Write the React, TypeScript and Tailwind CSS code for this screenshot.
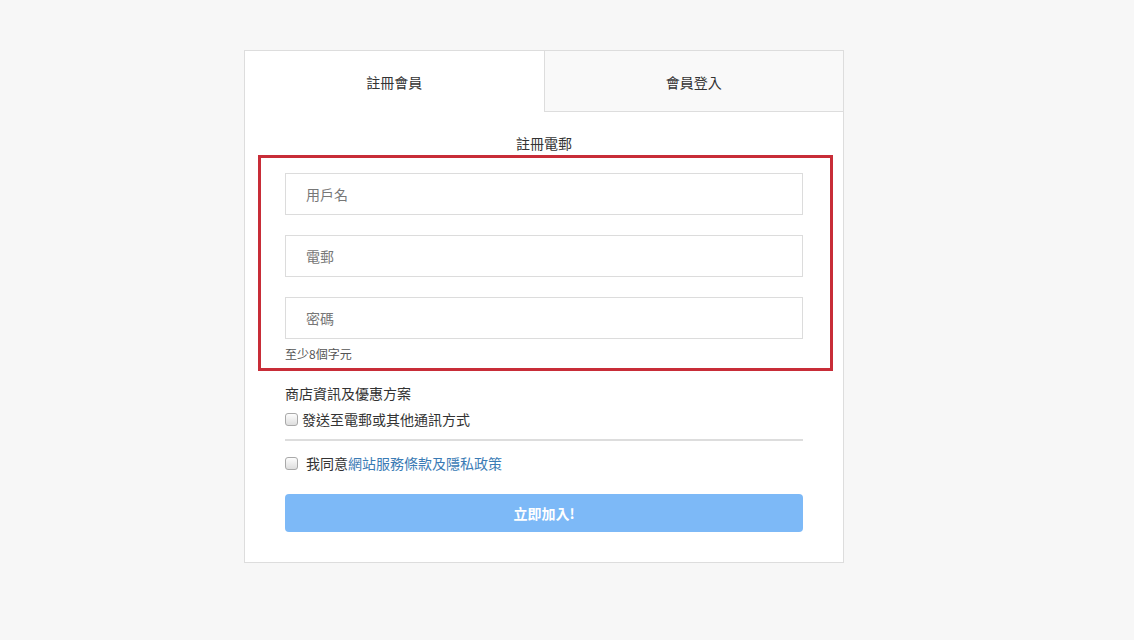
const font = { fontFamily: '"Noto Sans CJK TC", "Noto Sans", sans-serif' };

function Field({ placeholder }: { placeholder: string }) {
  return (
    <input
      type="text"
      placeholder={placeholder}
      className="block h-[42px] w-full border border-[#dcdcdc] bg-white px-[20px] text-[14px] text-[#555] placeholder:text-[#777] outline-none"
    />
  );
}

function Check() {
  return (
    <input
      type="checkbox"
      className="m-0 h-[13px] w-[13px] appearance-none rounded-[3px] border border-[#a9a9a9] bg-gradient-to-b from-[#fdfdfd] to-[#dedede]"
    />
  );
}

export default function App() {
  return (
    <div className="min-h-[640px] bg-[#f7f7f7] pt-[50px]" style={font}>
      <div className="ml-[244px] w-[600px] border border-[#dddddd] bg-white">
        {/* Tabs */}
        <div className="flex h-[61px]">
          <div className="flex flex-1 items-center justify-center pt-[2px] text-[14px] text-[#333]">註冊會員</div>
          <div className="flex flex-1 items-center justify-center border-b border-l border-[#dddddd] bg-[#f9f9f9] pt-[2px] text-[14px] text-[#333]">
            會員登入
          </div>
        </div>

        <div className="px-[40px] pb-[30px]">
          <div className="pt-[21px] text-center text-[14px] leading-[20px] text-[#333]">註冊電郵</div>

          {/* Highlighted fields */}
          <div className="mt-[2px] ml-[-27px] mr-[-30px] border-[3px] border-[#c82d38] pt-[15px] pb-[5px] pl-[24px] pr-[27px]">
            <div className="flex flex-col gap-[20px]">
              <Field placeholder="用戶名" />
              <Field placeholder="電郵" />
              <Field placeholder="密碼" />
            </div>
            <div className="mt-[6px] text-[12px] leading-[18px] text-[#555]">至少8個字元</div>
          </div>

          <div className="mt-[12px] text-[14px] leading-[20px] text-[#333]">商店資訊及優惠方案</div>
          <label className="mt-[6px] flex items-center text-[14px] leading-[20px] text-[#333]">
            <Check />
            <span className="ml-[4px]">發送至電郵或其他通訊方式</span>
          </label>

          <div className="mt-[10px] h-[2px] bg-[#dddddd]" />

          <label className="mt-[12px] flex items-center text-[14px] leading-[20px] text-[#333]">
            <Check />
            <span className="ml-[8px]">
              我同意<a className="text-[#3a7bb5]">網站服務條款及隱私政策</a>
            </span>
          </label>

          <button className="mt-[21px] flex h-[38px] w-full items-center justify-center rounded-[4px] bg-[#7db9f7] text-[14px] font-bold text-white">
            立即加入!
          </button>
        </div>
      </div>
    </div>
  );
}
